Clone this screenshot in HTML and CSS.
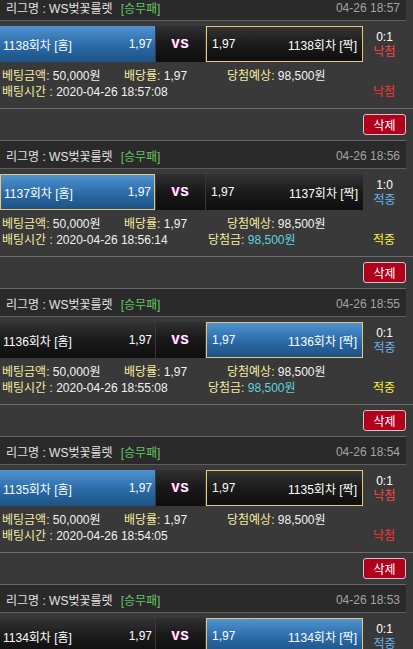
FILE: index.html
```html
<!DOCTYPE html>
<html lang="ko">
<head>
<meta charset="utf-8">
<title>베팅내역</title>
<link rel="stylesheet" href="styles.css">
</head>
<body>
<div class="page">

  <div class="bet">
    <div class="head"><span class="league">리그명 : WS벚꽃룰렛</span><span class="type">[승무패]</span><span class="date">04-26 18:57</span></div>
    <div class="match">
      <div class="team home blue"><span>1138회차 [홈]</span><span>1,97</span></div>
      <div class="vs">VS</div>
      <div class="team away dark picked"><span>1,97</span><span>1138회차 [짝]</span></div>
      <div class="result"><span class="score">0:1</span><span class="lose">낙첨</span></div>
    </div>
    <div class="info">
      <div class="row">
        <span class="c1"><b>베팅금액:</b> 50,000원</span>
        <span class="c2"><b>배당률:</b> 1,97</span>
        <span class="c3"><b>당첨예상:</b> 98,500원</span>
      </div>
      <div class="row">
        <span class="t1"><b>배팅시간 :</b> 2020-04-26 18:57:08</span>
        <span class="t2"></span>
        <span class="st lose">낙첨</span>
      </div>
    </div>
    <div class="actions"><button class="del">삭제</button></div>
  </div>

  <div class="bet">
    <div class="head"><span class="league">리그명 : WS벚꽃룰렛</span><span class="type">[승무패]</span><span class="date">04-26 18:56</span></div>
    <div class="match">
      <div class="team home blue picked"><span>1137회차 [홈]</span><span>1,97</span></div>
      <div class="vs">VS</div>
      <div class="team away dark"><span>1,97</span><span>1137회차 [짝]</span></div>
      <div class="result"><span class="score">1:0</span><span class="win">적중</span></div>
    </div>
    <div class="info">
      <div class="row">
        <span class="c1"><b>베팅금액:</b> 50,000원</span>
        <span class="c2"><b>배당률:</b> 1,97</span>
        <span class="c3"><b>당첨예상:</b> 98,500원</span>
      </div>
      <div class="row">
        <span class="t1"><b>배팅시간 :</b> 2020-04-26 18:56:14</span>
        <span class="t2"><b>당첨금:</b> <i>98,500원</i></span>
        <span class="st hit">적중</span>
      </div>
    </div>
    <div class="actions"><button class="del">삭제</button></div>
  </div>

  <div class="bet">
    <div class="head"><span class="league">리그명 : WS벚꽃룰렛</span><span class="type">[승무패]</span><span class="date">04-26 18:55</span></div>
    <div class="match">
      <div class="team home dark"><span>1136회차 [홈]</span><span>1,97</span></div>
      <div class="vs">VS</div>
      <div class="team away blue picked"><span>1,97</span><span>1136회차 [짝]</span></div>
      <div class="result"><span class="score">0:1</span><span class="win">적중</span></div>
    </div>
    <div class="info">
      <div class="row">
        <span class="c1"><b>베팅금액:</b> 50,000원</span>
        <span class="c2"><b>배당률:</b> 1,97</span>
        <span class="c3"><b>당첨예상:</b> 98,500원</span>
      </div>
      <div class="row">
        <span class="t1"><b>배팅시간 :</b> 2020-04-26 18:55:08</span>
        <span class="t2"><b>당첨금:</b> <i>98,500원</i></span>
        <span class="st hit">적중</span>
      </div>
    </div>
    <div class="actions"><button class="del">삭제</button></div>
  </div>

  <div class="bet">
    <div class="head"><span class="league">리그명 : WS벚꽃룰렛</span><span class="type">[승무패]</span><span class="date">04-26 18:54</span></div>
    <div class="match">
      <div class="team home blue"><span>1135회차 [홈]</span><span>1,97</span></div>
      <div class="vs">VS</div>
      <div class="team away dark picked"><span>1,97</span><span>1135회차 [짝]</span></div>
      <div class="result"><span class="score">0:1</span><span class="lose">낙첨</span></div>
    </div>
    <div class="info">
      <div class="row">
        <span class="c1"><b>베팅금액:</b> 50,000원</span>
        <span class="c2"><b>배당률:</b> 1,97</span>
        <span class="c3"><b>당첨예상:</b> 98,500원</span>
      </div>
      <div class="row">
        <span class="t1"><b>배팅시간 :</b> 2020-04-26 18:54:05</span>
        <span class="t2"></span>
        <span class="st lose">낙첨</span>
      </div>
    </div>
    <div class="actions"><button class="del">삭제</button></div>
  </div>

  <div class="bet">
    <div class="head"><span class="league">리그명 : WS벚꽃룰렛</span><span class="type">[승무패]</span><span class="date">04-26 18:53</span></div>
    <div class="match">
      <div class="team home dark"><span>1134회차 [홈]</span><span>1,97</span></div>
      <div class="vs">VS</div>
      <div class="team away blue picked"><span>1,97</span><span>1134회차 [짝]</span></div>
      <div class="result"><span class="score">0:1</span><span class="win">적중</span></div>
    </div>
    <div class="info">
      <div class="row">
        <span class="c1"><b>베팅금액:</b> 50,000원</span>
        <span class="c2"><b>배당률:</b> 1,97</span>
        <span class="c3"><b>당첨예상:</b> 98,500원</span>
      </div>
      <div class="row">
        <span class="t1"><b>배팅시간 :</b> 2020-04-26 18:53:11</span>
        <span class="t2"><b>당첨금:</b> <i>98,500원</i></span>
        <span class="st hit">적중</span>
      </div>
    </div>
    <div class="actions"><button class="del">삭제</button></div>
  </div>

</div>
</body>
</html>
```

FILE: styles.css
```css
html {
  overflow: hidden;
}
body {
  margin: 0;
  background: #393939;
  color: #eeeeee;
  font-family: "Liberation Sans", "Noto Sans CJK KR", sans-serif;
  font-size: 12px;
}
.page {
  width: 413px;
  margin-top: -8px;
}
.bet {
  display: flex;
  flex-direction: column;
}
.head {
  width: 406px;
  box-sizing: border-box;
  height: 29px;
  border-top: 1px solid #666666;
  border-bottom: 1px solid #5e5e5e;
  background: #2a2a2a;
  display: flex;
  align-items: center;
  padding: 2px 6px 0 6px;
  color: #e2e2e2;
  white-space: nowrap;
}
.type {
  color: #62c462;
  margin-left: 8px;
}
.date {
  margin-left: auto;
  color: #a3a3a3;
}
.match {
  width: 406px;
  height: 36px;
  margin-top: 5px;
  display: flex;
}
.team {
  box-sizing: border-box;
  display: flex;
  align-items: center;
  justify-content: space-between;
  color: #ffffff;
  white-space: nowrap;
}
.home {
  width: 155px;
  padding: 0 3px;
}
.away {
  width: 157px;
  padding: 0 5px;
}
.blue {
  background: linear-gradient(#4f93d2, #2a6aa6 55%, #1d5385);
}
.dark {
  background: linear-gradient(#343434, #1b1b1b 50%, #0e0e0e);
}
.picked {
  border: 1px solid #e9c872;
}
.vs {
  width: 49px;
  margin: 0 1px;
  background: linear-gradient(#303030, #181818 50%, #0e0e0e);
  display: flex;
  align-items: center;
  justify-content: center;
  font-weight: bold;
  font-size: 12px;
  color: #ffffff;
  text-shadow: -1px 0 #e0101a, 1px 0 #2a3bf0;
  letter-spacing: 1px;
}
.result {
  width: 43px;
  display: flex;
  flex-direction: column;
  justify-content: center;
  align-items: center;
  line-height: 15px;
  padding-top: 1px;
}
.score {
  color: #ffffff;
}
.lose {
  color: #ff4646;
}
.win {
  color: #6cb2f0;
}
.info {
  width: 406px;
  height: 46px;
  box-sizing: border-box;
  padding-top: 6px;
}
.row {
  display: flex;
  height: 16px;
  line-height: 16px;
  white-space: nowrap;
  color: #f2f2f2;
}
.row b {
  font-weight: normal;
  color: #f6eba0;
}
.row i {
  font-style: normal;
  color: #5ed4dc;
}
.c1 {
  width: 122px;
  padding-left: 2px;
}
.c2 {
  width: 103px;
}
.t1 {
  width: 206px;
  padding-left: 2px;
}
.t2 {
  width: 165px;
}
.st.hit {
  color: #fff03a;
}
.st.lose {
  color: #ff3434;
}
.actions {
  border-top: 1px solid #6c6c6c;
  height: 31px;
  display: flex;
  justify-content: flex-end;
  align-items: flex-start;
  padding-right: 7px;
}
.del {
  margin-top: 5px;
  width: 43px;
  height: 21px;
  padding: 0;
  border: 1px solid #c9c9c9;
  border-radius: 3px;
  background: #b1001c;
  color: #ffffff;
  font-family: "Noto Sans CJK KR", sans-serif;
  font-size: 12px;
  line-height: 18px;
}
```
